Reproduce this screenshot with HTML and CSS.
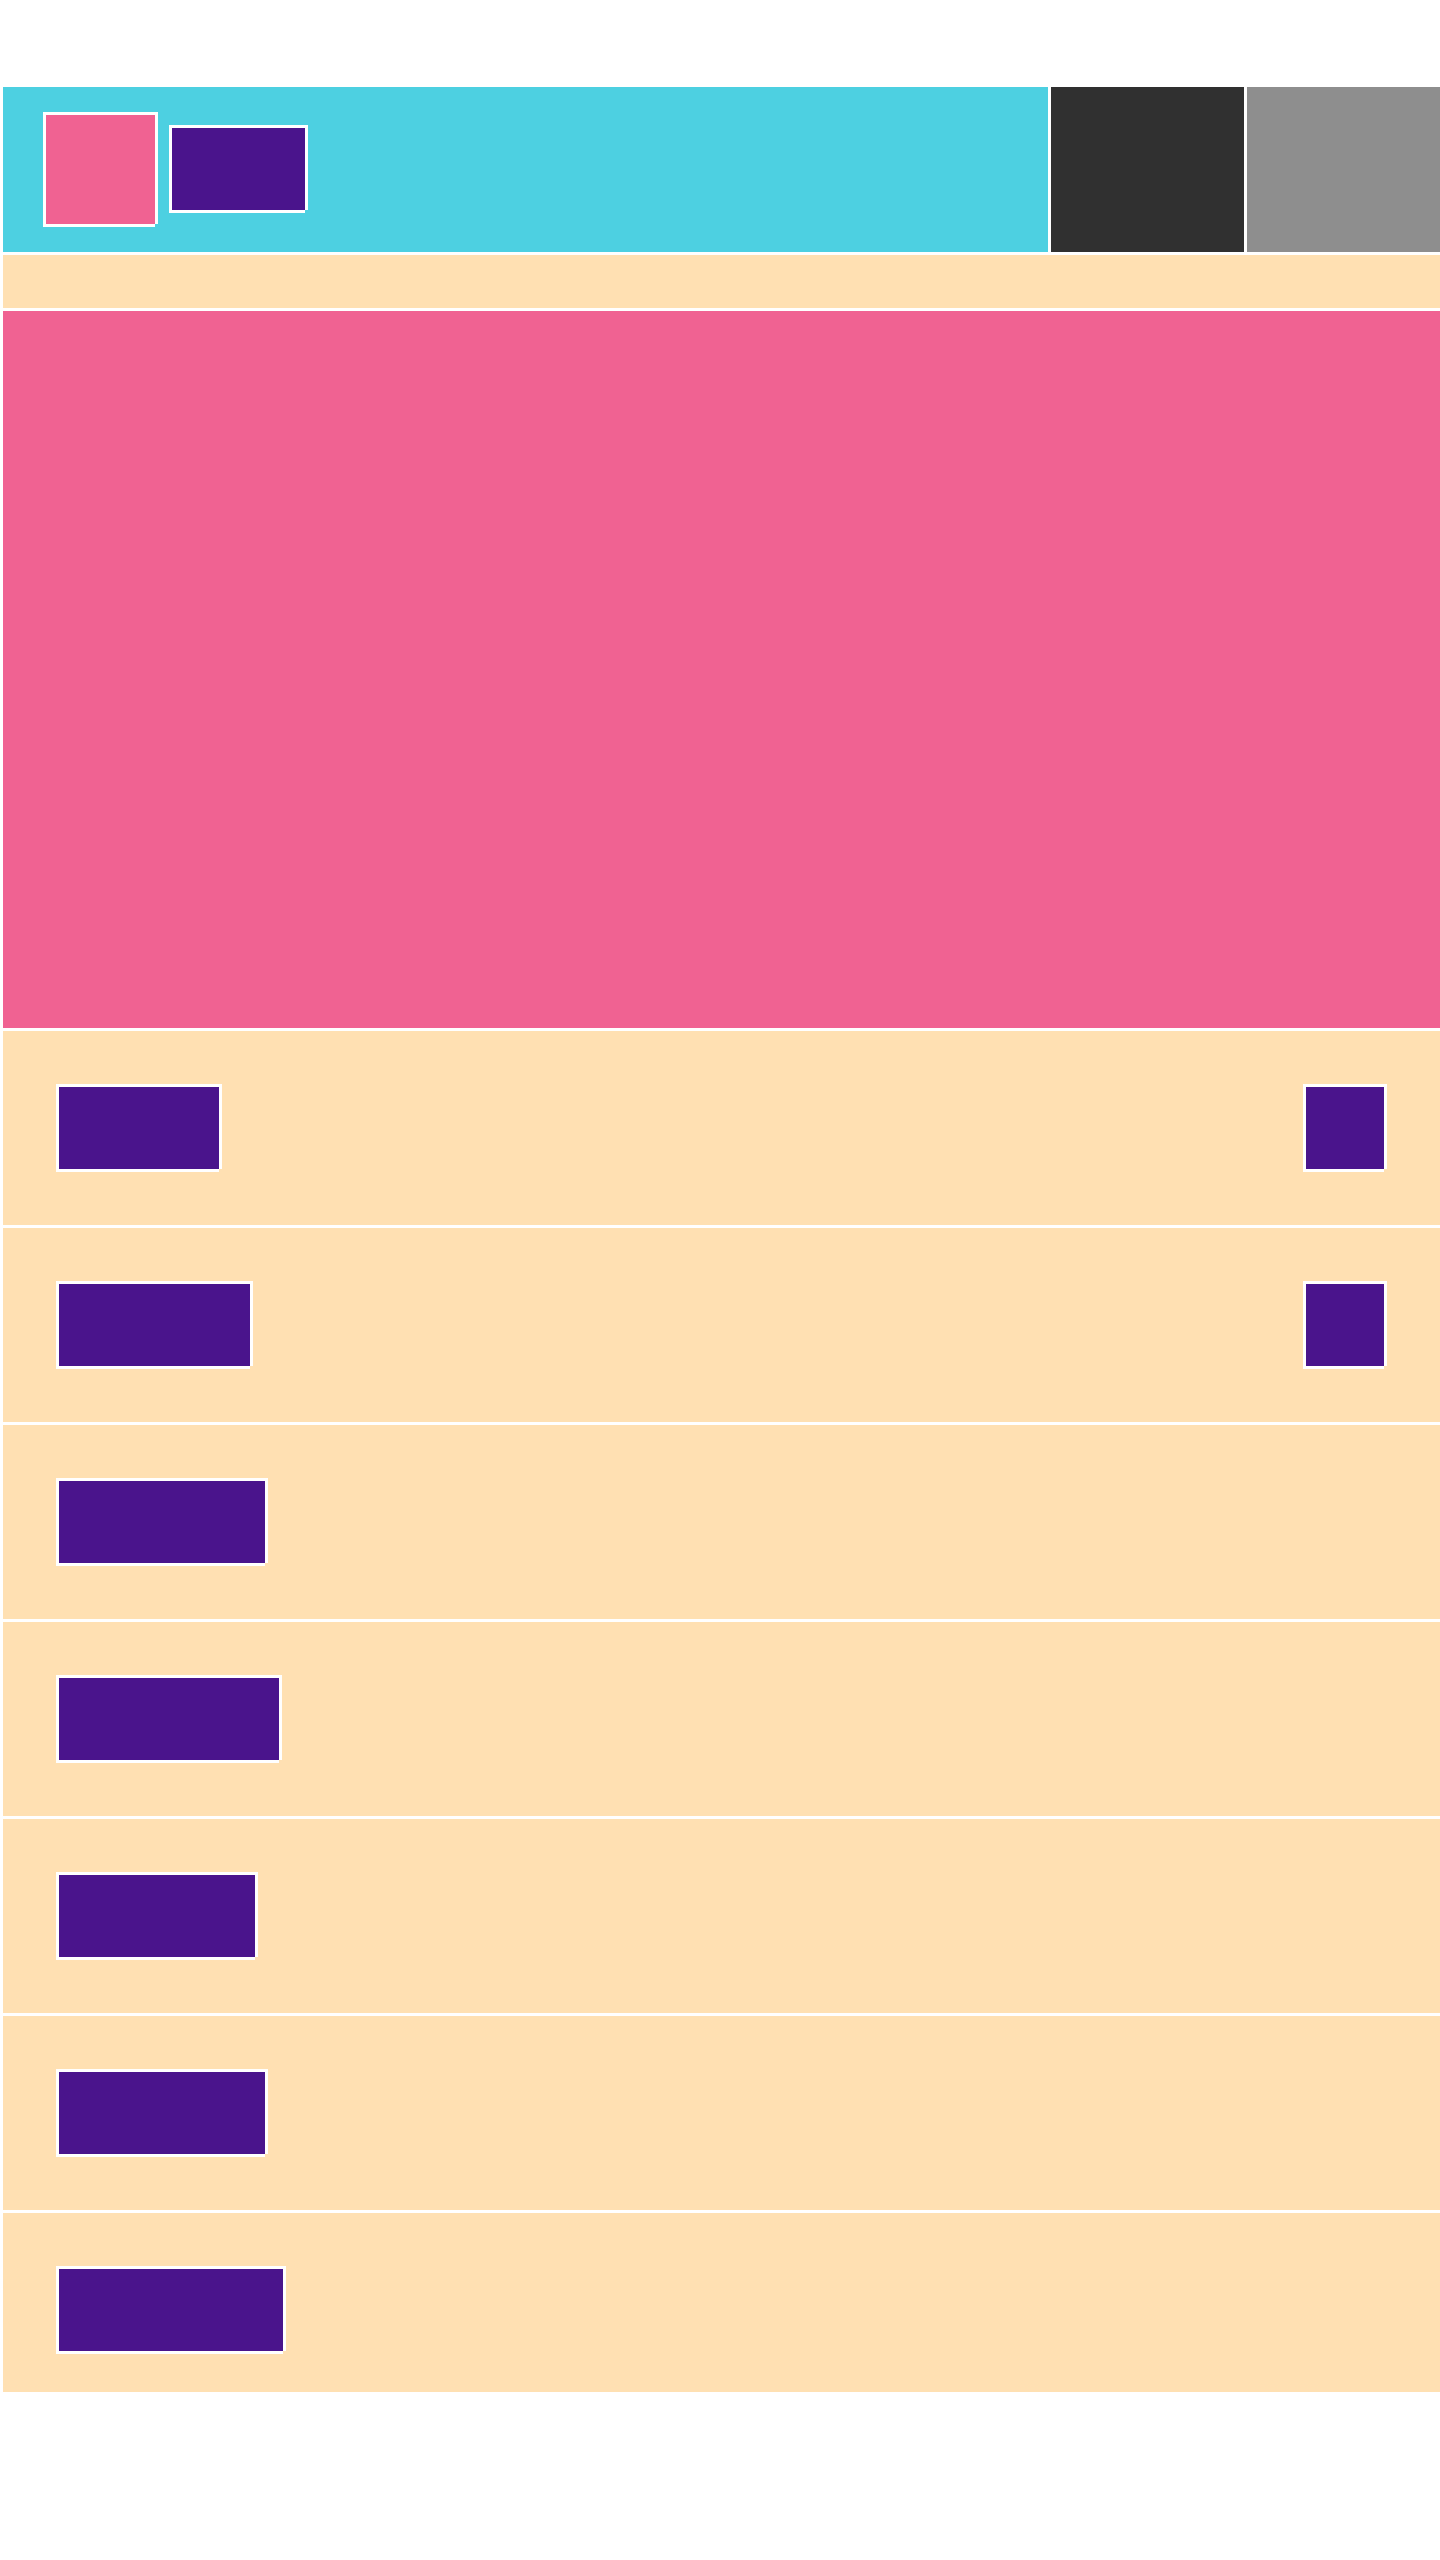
FILE: index.html
```html
<!DOCTYPE html>
<html lang="en">
<head>
<meta charset="utf-8">
<title>Wireframe</title>
<link rel="stylesheet" href="styles.css">
</head>
<body>
<div class="page">
  <header class="header">
    <div class="brand-area">
      <div class="blk logo"></div>
      <div class="blk brand-name"></div>
    </div>
    <div class="side side-dark"></div>
    <div class="side side-gray"></div>
  </header>
  <div class="subbar"></div>
  <section class="hero"></section>
  <div class="row">
    <div class="blk label w163"></div>
    <div class="blk action"></div>
  </div>
  <div class="row">
    <div class="blk label w194"></div>
    <div class="blk action"></div>
  </div>
  <div class="row">
    <div class="blk label w209"></div>
  </div>
  <div class="row">
    <div class="blk label w223"></div>
  </div>
  <div class="row">
    <div class="blk label w199"></div>
  </div>
  <div class="row">
    <div class="blk label w209"></div>
  </div>
  <div class="row row-last">
    <div class="blk label w227"></div>
  </div>
</div>
</body>
</html>
```

FILE: styles.css
```css
html, body {
  margin: 0;
  padding: 0;
  background: #ffffff;
  font-family: "Liberation Sans", Arial, sans-serif;
}

.page {
  display: flex;
  flex-direction: column;
  gap: 3px;
  padding: 87px 0 0 3px;
}

.blk {
  box-sizing: border-box;
  border-top: 3px solid #ffffff;
  border-left: 3px solid #ffffff;
  box-shadow: 3px 0 0 #ffffff, 0 3px 0 #ffffff;
  flex: none;
}

.header {
  display: flex;
  gap: 3px;
  height: 165px;
}

.brand-area {
  flex: 1;
  background: #4dd0e1;
  display: flex;
  align-items: flex-start;
  gap: 14px;
  padding: 25px 0 0 40px;
}

.logo {
  width: 112px;
  height: 112px;
  background: #f06292;
}

.brand-name {
  width: 136px;
  height: 85px;
  margin-top: 13px;
  background: #4a148c;
}

.side {
  width: 193px;
}

.side-dark {
  background: #303030;
}

.side-gray {
  background: #8e8e8e;
}

.subbar {
  height: 53px;
  background: #ffe0b2;
}

.hero {
  height: 717px;
  background: #f06292;
}

.row {
  display: flex;
  justify-content: space-between;
  align-items: flex-start;
  background: #ffe0b2;
  padding: 53px 56px 56px 53px;
}

.row-last {
  padding-bottom: 41px;
}

.label {
  height: 85px;
  background: #4a148c;
}

.action {
  width: 81px;
  height: 85px;
  background: #4a148c;
}

.w163 { width: 163px; }
.w194 { width: 194px; }
.w199 { width: 199px; }
.w209 { width: 209px; }
.w223 { width: 223px; }
.w227 { width: 227px; }
```
